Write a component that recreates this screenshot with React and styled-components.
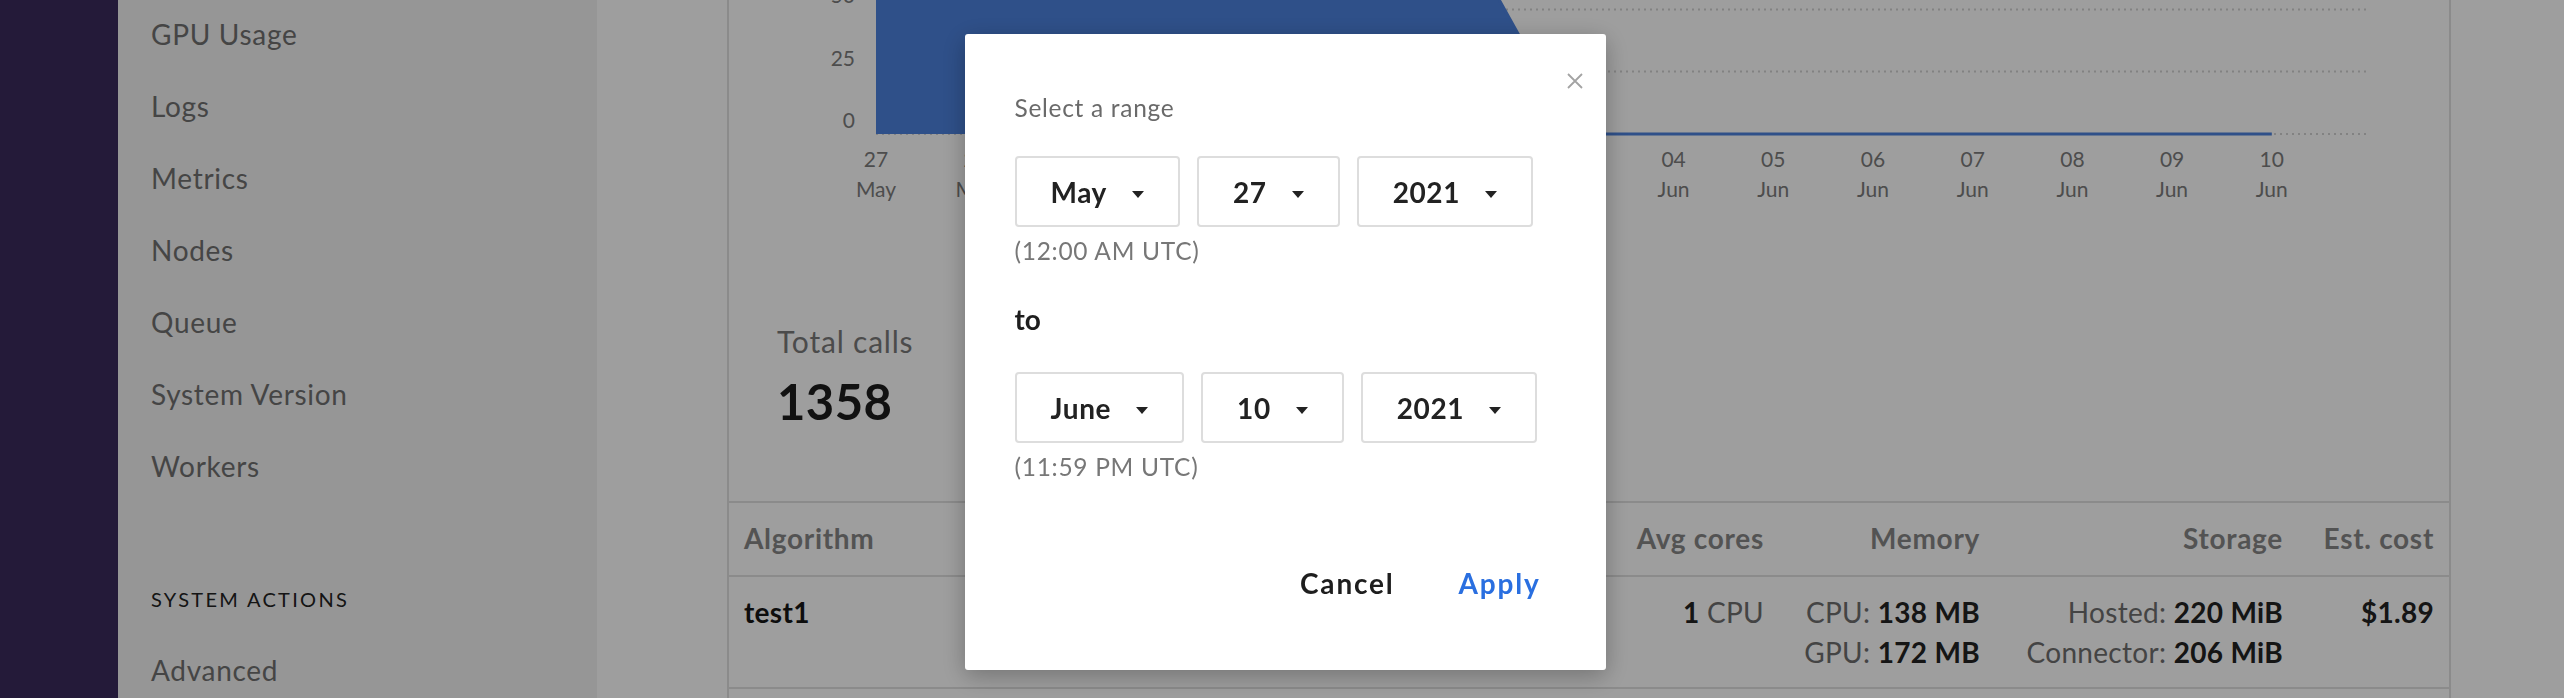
import React from "react"
import styled, { createGlobalStyle } from "styled-components"

const GlobalStyle = createGlobalStyle`
  html, body {
    margin: 0;
    padding: 0;
    overflow: hidden;
    background: #ffffff;
  }
  body {
    font-family: Lato, "Open Sans", sans-serif;
    color: #222;
  }
  * {
    box-sizing: border-box;
  }
`

const Page = styled.div`
  display: flex;
  width: 2564px;
  height: 698px;
  overflow: hidden;
`

const Rail = styled.div`
  width: 118px;
  flex-shrink: 0;
  background: #3a2b5c;
`

const Sidebar = styled.nav`
  width: 479px;
  flex-shrink: 0;
  background: #f2f2f2;
  display: flex;
  flex-direction: column;
`

const NavList = styled.div`
  margin-top: -2px;
  display: flex;
  flex-direction: column;
`

const NavItem = styled.div`
  height: 72px;
  line-height: 72px;
  padding-left: 33px;
  font-size: 28px;
  color: #707070;
  letter-spacing: 0.7px;
`

const Divider = styled.div`
  height: 2px;
  margin-top: 32px;
  background: #dadada;
`

const SectionLabel = styled.div`
  margin: 53px 0 23px;
  padding-left: 33px;
  font-size: 20px;
  line-height: 24px;
  letter-spacing: 2.3px;
  text-transform: uppercase;
  color: #222;
`

const Main = styled.main`
  flex: 1;
  padding-left: 130px;
  background: #ffffff;
`

const Card = styled.section`
  width: 1724px;
  height: 100%;
  border-left: 2px solid #e0e0e0;
  border-right: 2px solid #e0e0e0;
  display: flex;
  flex-direction: column;
`

const ChartSvg = styled.svg`
  display: block;
  width: 1720px;
  height: 230px;
  flex-shrink: 0;
  font-family: Lato, sans-serif;
`

const Stats = styled.div`
  padding: 93px 48px 72px;
`

const StatLabel = styled.div`
  font-size: 30px;
  line-height: 36px;
  letter-spacing: 0.8px;
  color: #7a7a7a;
`

const StatValue = styled.div`
  margin-top: 14px;
  font-size: 49px;
  line-height: 56px;
  font-weight: 700;
  letter-spacing: 0.4px;
  color: #1c1c1c;
`

const TableRow = styled.div`
  display: grid;
  grid-template-columns: 1fr 200px 216px 303px 151px;
  padding: ${p => (p.head ? "0 15px" : "15px 15px 0")};
  height: ${p => (p.head ? "74px" : "114px")};
  border-top: 2px solid #e0e0e0;
  font-size: 28px;
  line-height: ${p => (p.head ? "71px" : "40px")};
  &:last-child {
    border-bottom: 2px solid #e0e0e0;
  }
`

const HeadCell = styled.div`
  font-weight: 700;
  letter-spacing: 0.7px;
  color: #878787;
  text-align: ${p => (p.right ? "right" : "left")};
`

const Cell = styled.div`
  color: #6e6e6e;
  letter-spacing: 0.3px;
  text-align: ${p => (p.right ? "right" : "left")};
  white-space: nowrap;
`

const Strong = styled.span`
  font-weight: 700;
  color: ${p => (p.dark ? "#161616" : "#222")};
`

const Overlay = styled.div`
  position: fixed;
  inset: 0;
  background: rgba(0, 0, 0, 0.38);
  display: flex;
  align-items: center;
  justify-content: center;
  padding: 6px 0 0 6px;
`

const Modal = styled.div`
  position: relative;
  width: 641px;
  height: 636px;
  background: #ffffff;
  border-radius: 3px;
  box-shadow: 0 6px 24px rgba(0, 0, 0, 0.28);
  padding: 58px 65px 0 50px;
  display: flex;
  flex-direction: column;
`

const CloseButton = styled.button`
  position: absolute;
  top: 39px;
  right: 23px;
  width: 16px;
  height: 16px;
  padding: 0;
  border: none;
  background: none;
  display: flex;
`

const Title = styled.div`
  font-size: 24.5px;
  line-height: 32px;
  color: #6a6a6a;
  letter-spacing: 0.7px;
`

const SelectRow = styled.div`
  display: flex;
  gap: 17px;
  margin-top: ${p => p.top}px;
`

const Select = styled.div`
  height: 71px;
  display: inline-flex;
  align-items: center;
  gap: 25px;
  padding: 0 34px;
  border: 2px solid #dddddd;
  border-radius: 4px;
  font-size: 28px;
  font-weight: 700;
  letter-spacing: 0.6px;
  color: #222;
`

const Caret = styled.span`
  width: 0;
  height: 0;
  margin-top: 5px;
  border-left: 6.5px solid transparent;
  border-right: 6.5px solid transparent;
  border-top: 7px solid #222;
`

const Note = styled.div`
  margin-top: 9px;
  font-size: 24.5px;
  line-height: 30px;
  letter-spacing: 0.7px;
  color: #777;
`

const ToLabel = styled.div`
  margin-top: 36px;
  font-size: 28px;
  line-height: 34px;
  font-weight: 700;
  color: #1e1e1e;
`

const Actions = styled.div`
  margin-top: 81px;
  display: flex;
  justify-content: flex-end;
  gap: 64px;
`

const ActionButton = styled.button`
  padding: 0;
  border: none;
  background: none;
  font-family: inherit;
  font-size: 28px;
  line-height: 40px;
  font-weight: 700;
  letter-spacing: 1.8px;
  color: ${p => (p.primary ? "#2a6fe0" : "#1e1e1e")};
`

const days = [
  ["27", "May"], ["28", "May"], ["29", "May"], ["30", "May"], ["31", "May"],
  ["01", "Jun"], ["02", "Jun"], ["03", "Jun"], ["04", "Jun"], ["05", "Jun"],
  ["06", "Jun"], ["07", "Jun"], ["08", "Jun"], ["09", "Jun"], ["10", "Jun"],
]
const values = [160, 150, 140, 130, 120, 100, 71.6, 0, 0, 0, 0, 0, 0, 0, 0]

const X0 = 147
const STEP = 99.7
const xAt = i => X0 + i * STEP
const yAt = v => 134 - v * 2.5

const Chart = () => {
  const pts = values.map((v, i) => `${xAt(i)},${yAt(v)}`)
  const area = `${xAt(0)},134 ${pts.join(" ")} ${xAt(14)},134`
  return (
    <ChartSvg viewBox="0 0 1720 230">
      {[50, 25, 0].map(v => (
        <line key={v} x1={X0} x2={1639} y1={yAt(v) + (v === 50 ? 0.5 : 0)} y2={yAt(v) + (v === 50 ? 0.5 : 0)}
          stroke="#d2d2d2" strokeWidth="2" strokeDasharray="2 4" />
      ))}
      <polygon points={area} fill="#4c81dd" />
      <polyline points={pts.join(" ")} fill="none" stroke="#4c81dd" strokeWidth="3" />
      {[50, 25, 0].map(v => (
        <text key={v} x={126} y={yAt(v) - 6} textAnchor="end" fontSize="21" fill="#7c7c7c">{v}</text>
      ))}
      {days.map(([d, m], i) => (
        <g key={i} fill="#7c7c7c" fontSize="21" textAnchor="middle">
          <text x={xAt(i)} y={167}>{d}</text>
          <text x={xAt(i)} y={197}>{m}</text>
        </g>
      ))}
    </ChartSvg>
  )
}

const navItems = ["GPU Usage", "Logs", "Metrics", "Nodes", "Queue", "System Version", "Workers"]

const DateSelects = ({ month, day, year, top }) => (
  <SelectRow top={top}>
    <Select>{month}<Caret /></Select>
    <Select>{day}<Caret /></Select>
    <Select>{year}<Caret /></Select>
  </SelectRow>
)

const App = () => (
  <>
    <GlobalStyle />
    <Page>
      <Rail />
      <Sidebar>
        <NavList>
          {navItems.map(item => <NavItem key={item}>{item}</NavItem>)}
        </NavList>
        <Divider />
        <SectionLabel>System Actions</SectionLabel>
        <NavItem>Advanced</NavItem>
      </Sidebar>
      <Main>
        <Card>
          <Chart />
          <Stats>
            <StatLabel>Total calls</StatLabel>
            <StatValue>1358</StatValue>
          </Stats>
          <div>
            <TableRow head>
              <HeadCell>Algorithm</HeadCell>
              <HeadCell right>Avg cores</HeadCell>
              <HeadCell right>Memory</HeadCell>
              <HeadCell right>Storage</HeadCell>
              <HeadCell right>Est. cost</HeadCell>
            </TableRow>
            <TableRow>
              <Cell><Strong dark>test1</Strong></Cell>
              <Cell right><Strong>1</Strong> CPU</Cell>
              <Cell right>
                <div>CPU: <Strong>138 MB</Strong></div>
                <div>GPU: <Strong>172 MB</Strong></div>
              </Cell>
              <Cell right>
                <div>Hosted: <Strong>220 MiB</Strong></div>
                <div>Connector: <Strong>206 MiB</Strong></div>
              </Cell>
              <Cell right><Strong>$1.89</Strong></Cell>
            </TableRow>
          </div>
        </Card>
      </Main>
    </Page>
    <Overlay>
      <Modal>
        <CloseButton aria-label="Close">
          <svg width="16" height="16" viewBox="0 0 16 16">
            <path d="M1 1L15 15M15 1L1 15" stroke="#a3a3a3" strokeWidth="1.8" fill="none" />
          </svg>
        </CloseButton>
        <Title>Select a range</Title>
        <DateSelects top={32} month="May" day="27" year="2021" />
        <Note>(12:00 AM UTC)</Note>
        <ToLabel>to</ToLabel>
        <DateSelects top={36} month="June" day="10" year="2021" />
        <Note>(11:59 PM UTC)</Note>
        <Actions>
          <ActionButton>Cancel</ActionButton>
          <ActionButton primary>Apply</ActionButton>
        </Actions>
      </Modal>
    </Overlay>
  </>
)

export default App
